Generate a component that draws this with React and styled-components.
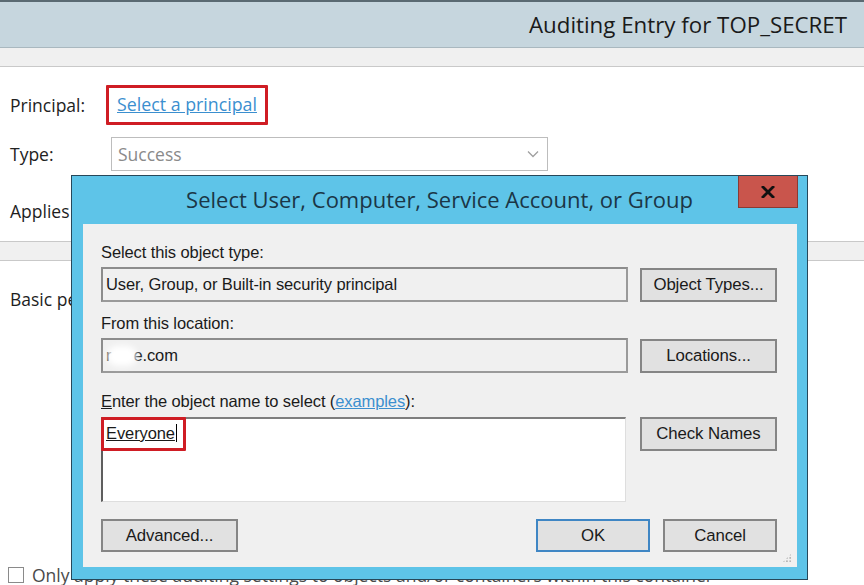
import React from 'react';
import styled, { createGlobalStyle } from 'styled-components';

const Global = createGlobalStyle`
  html, body { margin: 0; padding: 0; background: #fff; }
  body { width: 864px; height: 585px; overflow: hidden; font-family: "Open Sans", "Noto Sans", sans-serif; }
`;

const Page = styled.div`
  position: relative;
  width: 864px;
  height: 585px;
  overflow: hidden;
  background: #fff;
  color: #1e1e1e;
`;

const Header = styled.div`
  height: 45px;
  border-top: 2px solid #5a6a72;
  border-bottom: 1px solid #a9b8bf;
  background: #c6d6de;
  display: flex;
  align-items: center;
  justify-content: flex-end;
  padding-right: 17px;
  font-size: 22.3px;
  color: #1a1a1a;
`;

const Band = styled.div`
  height: ${p => p.h || 18}px;
  background: #f0f0f0;
  border-bottom: 1px solid #c9c9c9;
  border-top: ${p => (p.top ? '1px solid #c9c9c9' : 'none')};
`;

const Form = styled.div`
  padding: 18px 0 0 10px;
  display: grid;
  grid-template-columns: 96px 442px;
  row-gap: 12px;
  align-items: center;
  font-size: 17.5px;
`;

const Label = styled.div`
  color: #222;
`;

const Highlight = styled.span`
  display: inline-block;
  border: 3px solid #cf1d24;
  border-radius: 1px;
  padding: ${p => p.pad || '4px 8px 6px 8px'};
  margin: ${p => p.m || 0};
`;

const PrincipalLink = styled.a`
  color: #3b8fcf;
  text-decoration: underline;
  font-size: 17.8px;
`;

const Select = styled.div`
  margin-left: 5px;
  height: 32px;
  border: 1px solid #bdbdbd;
  display: flex;
  align-items: center;
  justify-content: space-between;
  padding: 0 8px 0 6px;
  color: #8a8a8a;
  font-size: 17.5px;
`;

const AppliesRow = styled.div`
  grid-column: 1 / span 2;
  height: 55px;
  display: flex;
  align-items: center;
  margin-bottom: 3px;
`;

const Section = styled.div`
  padding: 26px 0 0 10px;
  font-size: 17.5px;
  height: 276px;
  box-sizing: content-box;
`;

const CheckRow = styled.div`
  display: flex;
  align-items: center;
  gap: 8px;
  padding-left: 8px;
  font-size: 17.5px;
  color: #4a4a4a;
  white-space: nowrap;
`;

const Box = styled.span`
  flex: none;
  width: 14px;
  height: 14px;
  border: 1px solid #8a8a8a;
  background: #fff;
`;

/* modal window lying over the page */
const Dialog = styled.div`
  position: absolute;
  left: 71px;
  top: 175px;
  width: 735px;
  height: 403px;
  background: #5ec4e8;
  border: 1px solid #27485a;
  display: flex;
  flex-direction: column;
  font-family: "Liberation Sans", Arial, sans-serif;
`;

const TitleBar = styled.div`
  height: 46px;
  position: relative;
  display: flex;
  align-items: center;
  justify-content: center;
  font-family: "Open Sans", "Noto Sans", sans-serif;
  font-size: 22px;
  color: #1b3646;
  padding-bottom: 2px;
`;

const Close = styled.div`
  position: absolute;
  right: 9px;
  top: 0;
  width: 60px;
  height: 32px;
  background: #c9554c;
  border: 1px solid #8a3a34;
  border-top: none;
  box-sizing: border-box;
  display: flex;
  align-items: center;
  justify-content: center;
`;

const Body = styled.div`
  margin: 0 10px 0 11px;
  height: 343px;
  background: #f0f0f0;
  padding: 15px 20px 0 18px;
  box-sizing: border-box;
  display: grid;
  grid-template-columns: 527px 137px;
  column-gap: 12px;
  align-content: start;
  font-size: 16.5px;
  color: #1a1a1a;
  position: relative;
  letter-spacing: -0.1px;
`;

const FieldLabel = styled.div`
  grid-column: 1 / span 2;
  height: 27px;
  display: flex;
  align-items: center;
  margin-top: ${p => p.mt || 0}px;
`;

const Field = styled.div`
  height: 35px;
  box-sizing: border-box;
  border: 2px solid #8c8c8c;
  border-right-color: #9a9a9a;
  border-bottom-color: #9a9a9a;
  background: #f0f0f0;
  display: flex;
  align-items: center;
  padding-left: 3px;
  margin-top: 1px;
`;

const Smudge = styled.span`
  display: inline-block;
  width: 30px;
  height: 20px;
  margin: 0 -4px 0 -4px;
  background: #fff;
  border-radius: 10px;
  filter: blur(3px);
  vertical-align: middle;
`;

const NameArea = styled.div`
  height: 85px;
  margin-top: 2px;
  box-sizing: border-box;
  background: #fff;
  border-top: 2px solid #7e7e7e;
  border-left: 2px solid #5e5e5e;
  border-right: 1px solid #dedede;
  border-bottom: 1px solid #dedede;
  width: 525px;
`;

const Resolved = styled.span`
  text-decoration: underline;
  border-right: 1px solid #000;
  padding-right: 1px;
`;

const Button = styled.div`
  height: ${p => p.h || 34}px;
  box-sizing: border-box;
  background: #e1e1e1;
  border: ${p => (p.primary ? '2px solid #3f86c4' : '2px solid #858585')};
  display: flex;
  align-items: center;
  justify-content: center;
  font-size: 16.8px;
  color: #1a1a1a;
  width: ${p => (p.w ? p.w + 'px' : 'auto')};
  align-self: ${p => p.align || 'center'};
  margin-left: ${p => p.ml || 0}px;
  margin-top: ${p => p.mt || 0}px;
`;

const Footer = styled.div`
  grid-column: 1 / span 2;
  margin-top: 17px;
  display: flex;
  align-items: center;
`;

const Spacer = styled.div`
  flex: 1;
`;

const Examples = styled.a`
  color: #3b8fcf;
  text-decoration: underline;
`;

const Grip = styled.div`
  position: absolute;
  right: 5px;
  bottom: 4px;
  width: 10px;
  height: 10px;
  background-image: radial-gradient(circle, #b5b5b5 1px, transparent 1.2px);
  background-size: 3.3px 3.3px;
  clip-path: polygon(100% 0, 100% 100%, 0 100%);
`;

export default function App() {
  return (
    <Page>
      <Global />
      <Header>Auditing Entry for TOP_SECRET</Header>
      <Band h={18} />
      <Form>
        <Label>Principal:</Label>
        <div>
          <Highlight><PrincipalLink>Select a principal</PrincipalLink></Highlight>
        </div>
        <Label>Type:</Label>
        <Select>
          <span>Success</span>
          <svg width="12" height="8" viewBox="0 0 12 8">
            <path d="M1 1.5 L6 6.5 L11 1.5" fill="none" stroke="#a0a0a0" strokeWidth="1.3" />
          </svg>
        </Select>
        <AppliesRow>Applies to:</AppliesRow>
      </Form>
      <Band h={18} top />
      <Section>Basic permissions:</Section>
      <CheckRow>
        <Box />
        <span>Only apply these auditing settings to objects and/or containers within this container</span>
      </CheckRow>

      <Dialog>
        <TitleBar>
          Select User, Computer, Service Account, or Group
          <Close>
            <svg width="14" height="12" viewBox="0 0 14 12">
              <path d="M2 1 L12 11 M12 1 L2 11" stroke="#111" strokeWidth="2.8" strokeLinecap="square" />
            </svg>
          </Close>
        </TitleBar>
        <Body>
          <FieldLabel>Select this object type:</FieldLabel>
          <Field>User, Group, or Built-in security principal</Field>
          <Button w={137} mt={1}>Object Types...</Button>
          <FieldLabel mt={8}>From this location:</FieldLabel>
          <Field>r<Smudge />e.com</Field>
          <Button w={137} mt={1}>Locations...</Button>
          <FieldLabel mt={15}><span><u>E</u>nter the object name to select (<Examples>examples</Examples>):</span></FieldLabel>
          <NameArea>
            <Highlight pad="4px 6px 5px 2px" m="-2px 0 0 -2px">
              <Resolved>Everyone</Resolved>
            </Highlight>
          </NameArea>
          <Button w={137} align="start" mt={2}>Check Names</Button>
          <Footer>
            <Button w={137} h={33}>Advanced...</Button>
            <Spacer />
            <Button w={114} h={33} primary>OK</Button>
            <Button w={114} h={33} ml={13}>Cancel</Button>
          </Footer>
          <Grip />
        </Body>
      </Dialog>
    </Page>
  );
}
